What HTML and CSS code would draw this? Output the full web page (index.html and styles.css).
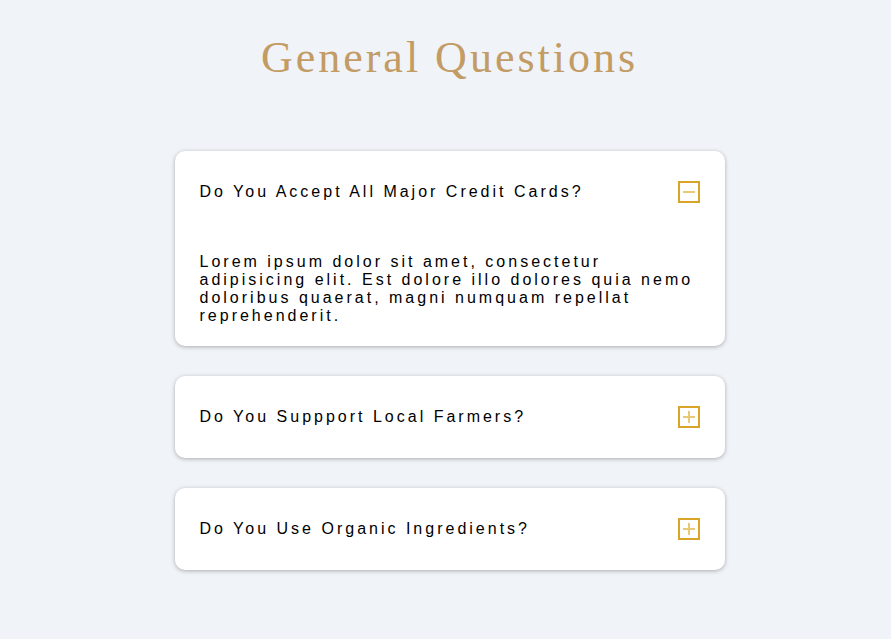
FILE: index.html
```html
<!DOCTYPE html>
<html lang="en">
<head>
<meta charset="utf-8">
<title>General Questions</title>
<link rel="stylesheet" href="styles.css">
</head>
<body>
<main class="faq">
  <h1 class="faq-title">General Questions</h1>
  <div class="faq-list">
    <section class="faq-item open">
      <div class="faq-head">
        <h2 class="faq-q">Do You Accept All Major Credit Cards?</h2>
        <span class="faq-toggle"><span class="bar-h"></span></span>
      </div>
      <p class="faq-a">Lorem ipsum dolor sit amet, consectetur adipisicing elit. Est dolore illo dolores quia nemo doloribus quaerat, magni numquam repellat reprehenderit.</p>
    </section>
    <section class="faq-item">
      <div class="faq-head">
        <h2 class="faq-q">Do You Suppport Local Farmers?</h2>
        <span class="faq-toggle"><span class="bar-h"></span><span class="bar-v"></span></span>
      </div>
    </section>
    <section class="faq-item">
      <div class="faq-head">
        <h2 class="faq-q">Do You Use Organic Ingredients?</h2>
        <span class="faq-toggle"><span class="bar-h"></span><span class="bar-v"></span></span>
      </div>
    </section>
  </div>
</main>
</body>
</html>
```
FILE: styles.css
```css
* { box-sizing: border-box; }
html, body { margin: 0; padding: 0; }
body {
  background: #f0f4f8;
  font-family: "Liberation Sans", Arial, sans-serif;
  color: #000;
  padding-left: 8px;
}
.faq {
  width: 550px;
  margin: 0 auto;
  padding: 34px 0 60px;
}
.faq-title {
  margin: 0 0 69px;
  text-align: center;
  font-family: "Liberation Serif", "Times New Roman", serif;
  font-weight: 400;
  font-size: 44px;
  line-height: 48px;
  letter-spacing: 3px;
  color: #c39b64;
}
.faq-list {
  display: flex;
  flex-direction: column;
  gap: 30px;
}
.faq-item {
  background: #fff;
  border-radius: 10px;
  box-shadow: 0 1px 4px rgba(0, 0, 0, 0.3);
  padding: 0 25px;
}
.faq-head {
  display: flex;
  align-items: center;
  justify-content: space-between;
  height: 82px;
}
.faq-q {
  margin: 0;
  font-size: 16px;
  font-weight: 400;
  letter-spacing: 3px;
}
.faq-toggle {
  position: relative;
  width: 22px;
  height: 22px;
  border: 2px solid #d9a428;
  flex: none;
}
.bar-h, .bar-v {
  position: absolute;
  background: #e9c878;
}
.bar-h { left: 3px; right: 3px; top: 8px; height: 2px; }
.bar-v { top: 3px; bottom: 3px; left: 8px; width: 2px; }
.faq-a {
  margin: 0;
  padding: 20px 0 21px;
  font-size: 16px;
  line-height: 18px;
  letter-spacing: 3px;
}
```
